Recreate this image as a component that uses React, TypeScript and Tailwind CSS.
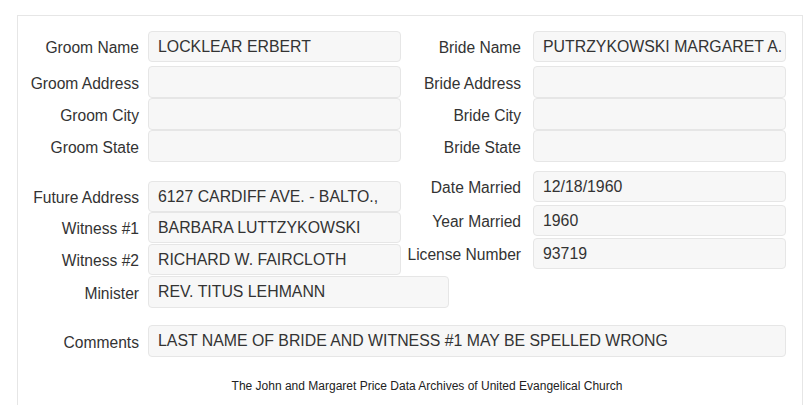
type Field = { label: string; value?: string; height?: string; gap?: string };

function Row({ label, value, labelW, inputW, height = "h-[32px]", gap = "", labelGap }: {
  label: string;
  value?: string;
  labelW: string;
  inputW: string;
  height?: string;
  gap?: string;
  labelGap: string;
}) {
  return (
    <div className={`flex items-center ${gap}`}>
      <div className={`${labelW} shrink-0 whitespace-nowrap pt-[3px] text-right text-[15.6px] text-[#333]`}>{label}</div>
      <div
        className={`${labelGap} ${inputW} ${height} flex shrink-0 items-center whitespace-nowrap rounded-[4px] border border-[#e6e6e6] bg-[#f7f7f7] px-[9px] text-[15.85px] text-[#333]`}
      >
        {value}
      </div>
    </div>
  );
}

const groom: Field[] = [
  { label: "Groom Name", value: "LOCKLEAR ERBERT", height: "h-[31px]" },
  { label: "Groom Address", gap: "mt-[4px]" },
  { label: "Groom City" },
  { label: "Groom State" },
];

const bride: Field[] = [
  { label: "Bride Name", value: "PUTRZYKOWSKI MARGARET A.", height: "h-[31px]" },
  { label: "Bride Address", gap: "mt-[4px]" },
  { label: "Bride City" },
  { label: "Bride State" },
];

const extraLeft: Field[] = [
  { label: "Future Address", value: "6127 CARDIFF AVE. - BALTO.,", height: "h-[31px]" },
  { label: "Witness #1", value: "BARBARA LUTTZYKOWSKI", height: "h-[31px]" },
  { label: "Witness #2", value: "RICHARD W. FAIRCLOTH", height: "h-[31px]", gap: "mt-[1px]" },
];

const extraRight: Field[] = [
  { label: "Date Married", value: "12/18/1960", height: "h-[31px]" },
  { label: "Year Married", value: "1960", height: "h-[31px]", gap: "mt-[3px]" },
  { label: "License Number", value: "93719", height: "h-[31px]", gap: "mt-[2px]" },
];

export default function App() {
  return (
    <div className="min-h-[405px] bg-white pl-[17px] pr-[2px] pt-[15px] font-['Liberation_Sans',Arial,sans-serif]">
      <div className="min-h-[400px] border border-b-0 border-[#e6e6e6] pt-[15px]">
        <div className="flex">
          <div className="w-[384px] shrink-0">
            {groom.map((f) => (
              <Row key={f.label} {...f} labelW="w-[121px]" labelGap="ml-[9px]" inputW="w-[253px]" />
            ))}
          </div>
          <div>
            {bride.map((f) => (
              <Row key={f.label} {...f} labelW="w-[119px]" labelGap="ml-[12px]" inputW="w-[253px]" />
            ))}
          </div>
        </div>

        <div className="flex">
          <div className="mt-[19px] w-[384px] shrink-0">
            {extraLeft.map((f) => (
              <Row key={f.label} {...f} labelW="w-[121px]" labelGap="ml-[9px]" inputW="w-[253px]" />
            ))}
            <Row label="Minister" value="REV. TITUS LEHMANN" labelW="w-[121px]" labelGap="ml-[9px]" inputW="w-[301px]" gap="mt-[1px]" />
          </div>
          <div className="mt-[9px]">
            {extraRight.map((f) => (
              <Row key={f.label} {...f} labelW="w-[119px]" labelGap="ml-[12px]" inputW="w-[253px]" />
            ))}
          </div>
        </div>

        <div className="mt-[17px]">
          <Row
            label="Comments"
            value="LAST NAME OF BRIDE AND WITNESS #1 MAY BE SPELLED WRONG"
            labelW="w-[121px]"
            labelGap="ml-[9px]"
            inputW="w-[638px]"
          />
        </div>

        <p className="mt-[20px] pl-[34px] text-center text-[12px] text-[#222]">
          The John and Margaret Price Data Archives of United Evangelical Church
        </p>
      </div>
    </div>
  );
}
